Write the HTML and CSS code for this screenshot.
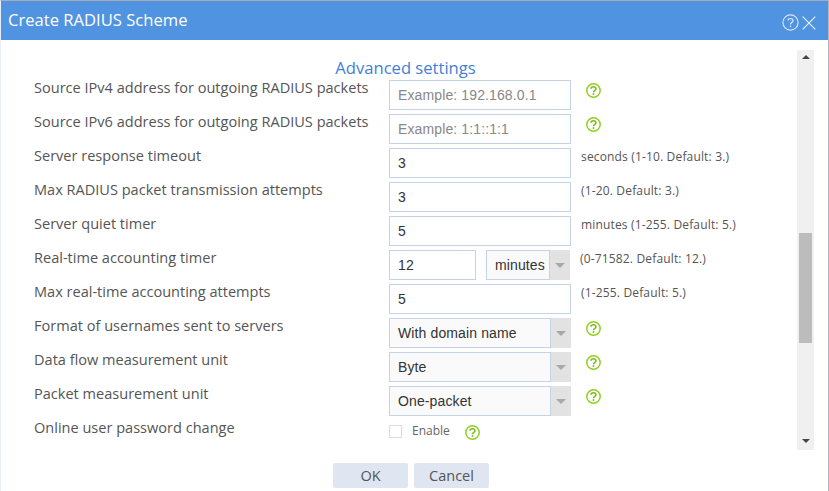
FILE: index.html
```html
<!DOCTYPE html>
<html lang="en">
<head>
<meta charset="utf-8">
<title>Create RADIUS Scheme</title>
<link rel="stylesheet" href="styles.css">
</head>
<body>
<svg class="defs" width="0" height="0" aria-hidden="true">
  <symbol id="help" viewBox="0 0 15 15">
    <circle cx="7.5" cy="7.5" r="6.7" fill="#fff" stroke="#8fd11f" stroke-width="1.5"/>
    <path d="M5 5.8C5.1 3.1 10 3.1 10 5.8C10 7.5 7.5 7.4 7.5 9.3" fill="none" stroke="#7cb518" stroke-width="1.5"/>
    <rect x="6.7" y="10.2" width="1.6" height="1.7" fill="#7cb518"/>
  </symbol>
</svg>
<div class="dialog">
  <header class="titlebar">
    <h1 class="title">Create RADIUS Scheme</h1>
    <div class="tools">
      <svg class="tool" width="17" height="17" viewBox="0 0 17 17"><circle cx="8.5" cy="8.5" r="7.6" fill="none" stroke="#d3e4f8" stroke-width="1.2"/><path d="M6 6.6C6.1 3.9 11 3.9 11 6.6C11 8.5 8.5 8.3 8.5 10.6" fill="none" stroke="#d3e4f8" stroke-width="1.3"/><rect x="7.8" y="11.6" width="1.4" height="1.5" fill="#d3e4f8"/></svg>
      <svg class="tool" width="14" height="14" viewBox="0 0 14 14"><path d="M.7.7L13.3 13.3M13.3.7L.7 13.3" stroke="#e6f0fb" stroke-width="1.2"/></svg>
    </div>
  </header>
  <div class="content">
    <main class="pane">
      <h2 class="section">Advanced settings</h2>
      <div class="form">
        <div class="row"><span class="label">Source IPv4 address for outgoing RADIUS packets</span><div class="field"><span class="input ph">Example: 192.168.0.1</span><svg class="help"><use href="#help"/></svg></div></div>
        <div class="row"><span class="label">Source IPv6 address for outgoing RADIUS packets</span><div class="field"><span class="input ph">Example: 1:1::1:1</span><svg class="help"><use href="#help"/></svg></div></div>
        <div class="row"><span class="label">Server response timeout</span><div class="field"><span class="input">3</span><span class="hint">seconds (1-10. Default: 3.)</span></div></div>
        <div class="row"><span class="label">Max RADIUS packet transmission attempts</span><div class="field"><span class="input">3</span><span class="hint">(1-20. Default: 3.)</span></div></div>
        <div class="row"><span class="label">Server quiet timer</span><div class="field"><span class="input">5</span><span class="hint">minutes (1-255. Default: 5.)</span></div></div>
        <div class="row"><span class="label">Real-time accounting timer</span><div class="field"><span class="input short">12</span><span class="select mini"><span class="value">minutes</span><span class="arrow"></span></span><span class="hint">(0-71582. Default: 12.)</span></div></div>
        <div class="row"><span class="label">Max real-time accounting attempts</span><div class="field"><span class="input">5</span><span class="hint">(1-255. Default: 5.)</span></div></div>
        <div class="row"><span class="label">Format of usernames sent to servers</span><div class="field"><span class="select"><span class="value">With domain name</span><span class="arrow"></span></span><svg class="help"><use href="#help"/></svg></div></div>
        <div class="row"><span class="label">Data flow measurement unit</span><div class="field"><span class="select"><span class="value">Byte</span><span class="arrow"></span></span><svg class="help"><use href="#help"/></svg></div></div>
        <div class="row"><span class="label">Packet measurement unit</span><div class="field"><span class="select"><span class="value">One-packet</span><span class="arrow"></span></span><svg class="help"><use href="#help"/></svg></div></div>
        <div class="row"><span class="label">Online user password change</span><div class="field check"><span class="box"></span><span class="enable">Enable</span><svg class="help"><use href="#help"/></svg></div></div>
      </div>
    </main>
    <div class="scrollbar">
      <span class="up"></span>
      <span class="thumb"></span>
      <span class="down"></span>
    </div>
  </div>
  <footer class="actions">
    <button class="btn" type="button">OK</button>
    <button class="btn" type="button">Cancel</button>
  </footer>
</div>
</body>
</html>
```
FILE: styles.css
```css
* { box-sizing: border-box; }
html, body { margin: 0; padding: 0; height: 491px; overflow: hidden; background: #fff; }
.defs { position: absolute; }
.dialog {
  width: 829px; height: 491px; display: flex; flex-direction: column;
  border-top: 1px solid #a9adb3; border-left: 1px solid #e6effb; border-right: 1px solid #b4b6bc;
  font-family: "Open Sans", "Noto Sans", sans-serif;
}
.titlebar {
  height: 39px; flex: none; background: #5093e1; color: #fff;
  display: flex; align-items: center; justify-content: space-between; padding: 0 12px 0 7px;
}
.title { margin: 0; font-size: 16.6px; font-weight: 400; line-height: 37px; height: 39px; }
.tools { display: flex; align-items: center; gap: 3px; margin-top: 4px; }
.tool { display: block; }
.content { flex: 1; display: flex; padding: 10px 14px 0 0; min-height: 0; height: 410px; }
.pane { flex: 1; min-width: 0; padding-left: 33px; }
.section {
  margin: 8px 0 0; font-size: 16.6px; font-weight: 400; line-height: 20px; height: 22px;
  color: #3f7fd6; text-align: center; padding-right: 20px;
}
.form { display: flex; flex-direction: column; }
.row { height: 34px; display: flex; align-items: flex-start; }
.label { width: 355px; flex: none; font-size: 14.55px; line-height: 20px; color: #555; white-space: nowrap; margin-top: -3px; }
.field { display: flex; align-items: flex-start; height: 30px; }
.input {
  width: 182px; height: 30px; border: 1px solid #c3d3e9; background: #fff; padding: 0 8px;
  font: 14px/28px "Liberation Sans", Arial, sans-serif; letter-spacing: .12px; color: #333;
}
.input.ph { color: #888; }
.input.short { width: 87px; margin-right: 10px; }
.hint { margin-left: 10px; font-size: 12px; letter-spacing: .16px; line-height: 20px; color: #555; margin-top: -1px; white-space: nowrap; }
.help { width: 15px; height: 15px; margin: 3px 0 0 15px; flex: none; }
.select { width: 182px; height: 30px; display: flex; }
.select.mini { width: 84px; }
.value {
  flex: 1; min-width: 0; border: 1px solid #c3d3e9; background: #fafafa; padding: 0 8px;
  font: 14px/28px "Liberation Sans", Arial, sans-serif; letter-spacing: .12px; color: #333; white-space: nowrap;
}
.arrow { width: 20px; flex: none; background: #e2e2e2; position: relative; }
.arrow::after {
  content: ""; position: absolute; left: 5px; top: 13px;
  border: 5px solid transparent; border-top: 5px solid #a8a8a8; border-bottom: 0;
}
.check { align-items: center; height: 14px; margin-top: 4px; }
.box { width: 13px; height: 13px; border: 1px solid #dcdcdc; background: #fff; }
.enable { margin-left: 10px; font-size: 12px; line-height: 14px; color: #666; }
.check .help { margin: 2px 0 0 15px; }
.scrollbar { width: 17px; height: 400px; flex: none; background: #f0f0f0; position: relative; }
.thumb { position: absolute; left: 2px; top: 183px; width: 13px; height: 110px; background: #bcbcbc; }
.up, .down { position: absolute; left: 5px; border: 4px solid transparent; }
.up { top: 5px; border-bottom: 4px solid #444; border-top: 0; }
.down { bottom: 7px; border-top: 4px solid #444; border-bottom: 0; }
.actions { flex: none; display: flex; justify-content: center; gap: 6px; padding: 13px 0 3px 0; margin-left: -7px; }
.btn {
  width: 75px; height: 25px; border: 0; border-radius: 2px; background: #dfe6f2; padding: 0;
  font: 14.5px/25px "Open Sans", "Noto Sans", sans-serif; color: #555;
}
```
